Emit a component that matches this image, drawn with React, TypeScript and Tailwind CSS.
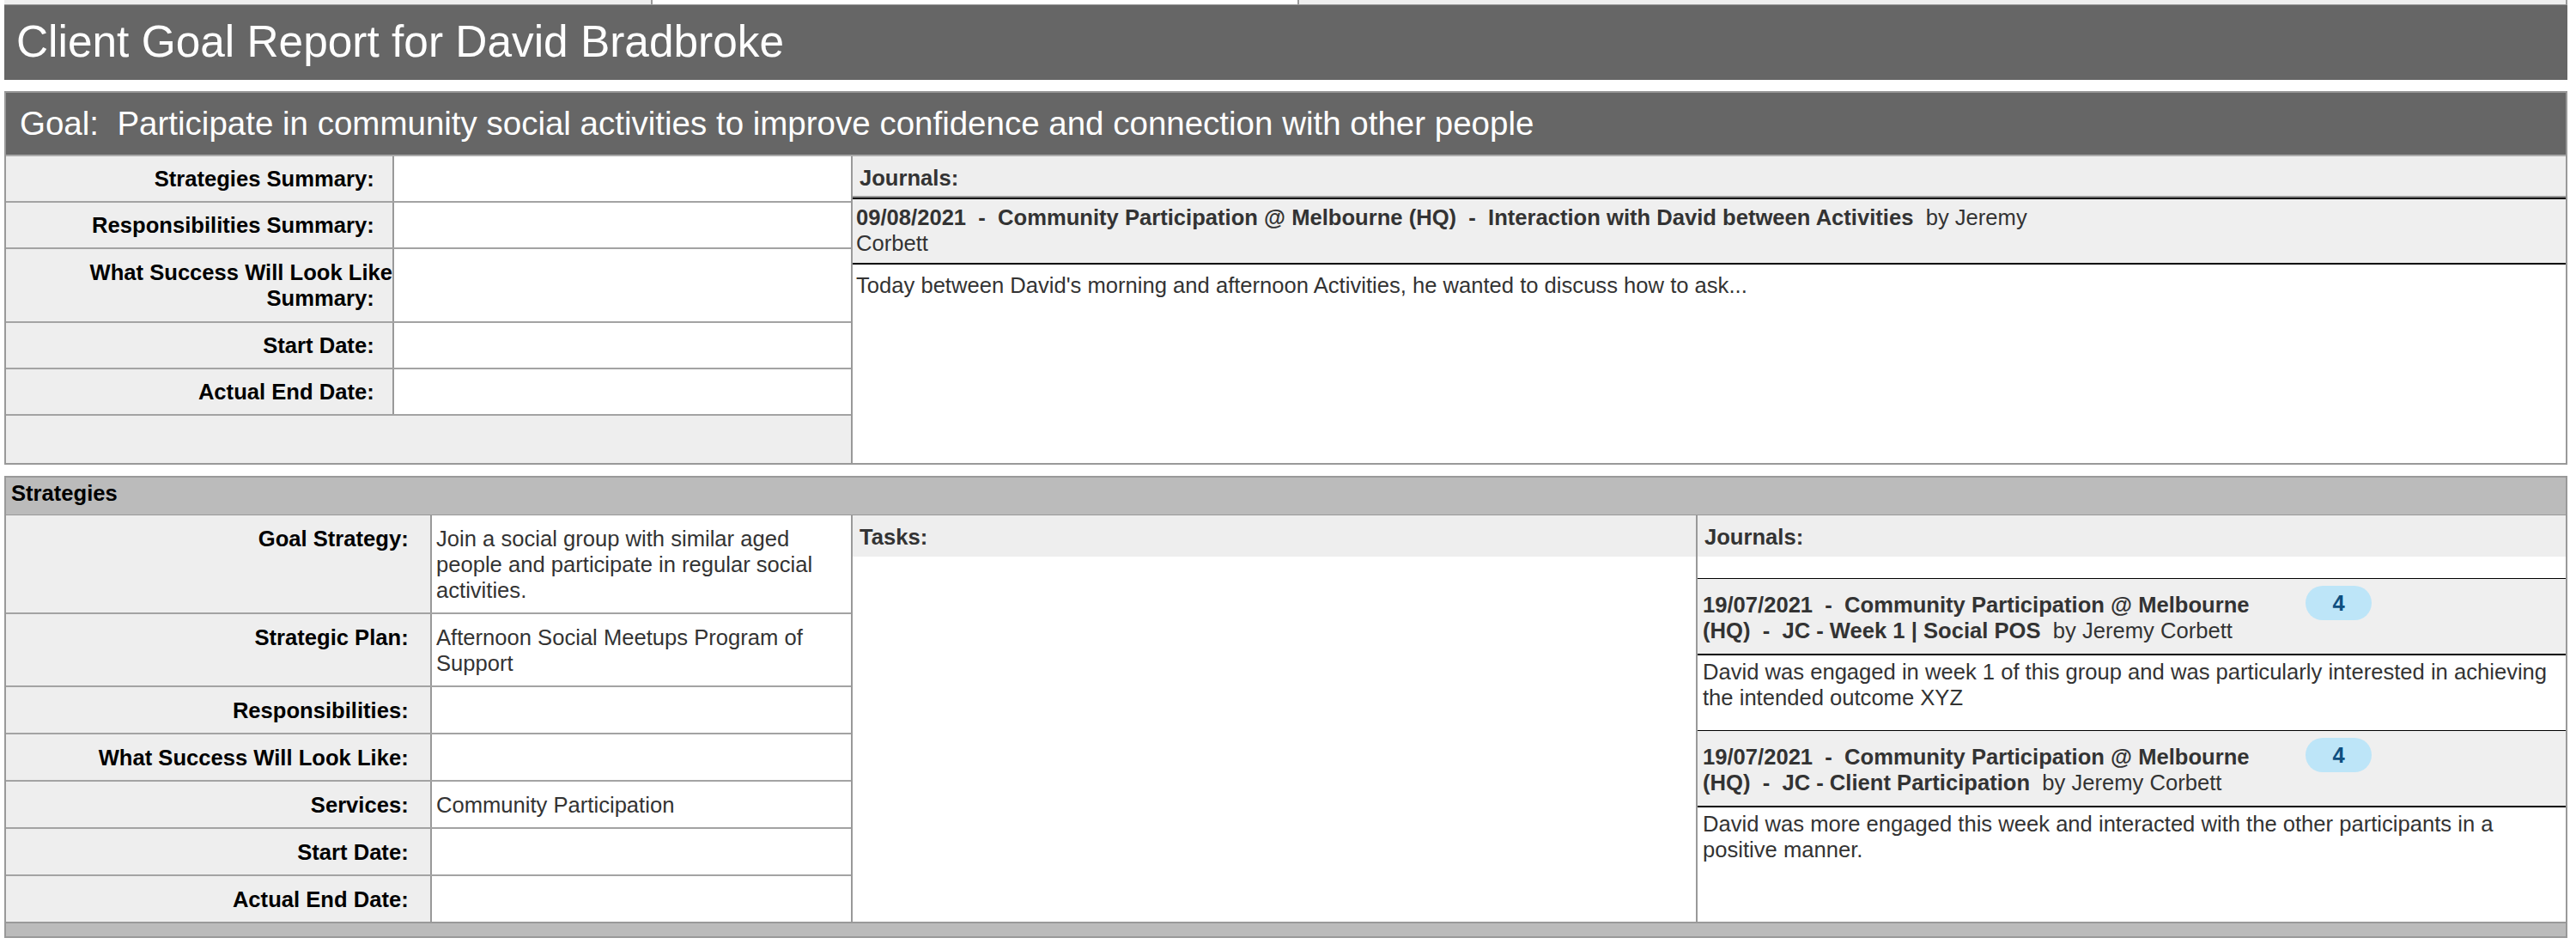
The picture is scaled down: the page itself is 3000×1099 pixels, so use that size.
const NB = "\u00a0\u00a0\u00a0";

function SummaryRow({ label, value, pad = "py-[11px]" }: { label: string; value?: string; pad?: string }) {
  return (
    <div className="flex border-b-2 border-[#a3a3a3]">
      <div className={`w-[452px] shrink-0 border-r-2 border-[#999] bg-[#eee] text-right font-bold text-black ${pad}`}>
        {label + NB}
      </div>
      <div className={`flex-1 bg-white px-[5px] ${pad}`}>{value}</div>
    </div>
  );
}

function StrategyRow({ label, value, last }: { label: string; value?: string; last?: boolean }) {
  return (
    <div className={`flex ${last ? "" : "border-b-2 border-[#a3a3a3]"}`}>
      <div className="w-[496px] shrink-0 border-r-2 border-[#999] bg-[#eee] pr-[4px] pt-[12px] pb-[11px] text-right font-bold text-black">
        {label + NB}
      </div>
      <div className="flex-1 bg-white px-[5px] pt-[12px] pb-[11px]">{value}</div>
    </div>
  );
}

function Badge({ n }: { n: number }) {
  return (
    <span className="ml-[32px] mt-[8px] flex h-[40px] w-[77px] shrink-0 items-center justify-center rounded-full bg-[#bde5f8] font-bold text-[#0f4f80]">
      {n}
    </span>
  );
}

// journal header wraps in two lines in the report, kept as two blocks
function StrategyJournal({ first, second, body, bodyClass }: { first: string; second: string; body: string; bodyClass: string }) {
  return (
    <div>
      <div className="flex items-start border-t border-b-2 border-t-black border-b-black bg-[#efefef] pl-[6px]">
        <div className="w-[670px] shrink-0 pt-[15px] pb-[12px]">
          <div className="font-bold">{first}</div>
          <div>
            <span className="font-bold">{second}</span>
            <span>{"\u00a0 by Jeremy Corbett"}</span>
          </div>
        </div>
        <Badge n={4} />
      </div>
      <div className={`bg-white pl-[6px] pr-[20px] pt-[4px] ${bodyClass}`}>{body}</div>
    </div>
  );
}

export default function App() {
  return (
    <div className="min-h-[1099px] w-[3000px] bg-white font-['Liberation_Sans',Arial,sans-serif] text-[25.6px] leading-[30px] text-[#333]">
      {/* tail of the table above */}
      <div className="ml-[5px] flex h-[6px] w-[2985px] border-b border-[#999]">
        <div className="w-[753px] bg-[#eee]" />
        <div className="w-[753px] border-l-2 border-[#999] bg-white" />
        <div className="flex-1 border-x-2 border-[#999] bg-[#eee]" />
      </div>

      <div className="ml-[5px] flex h-[87px] w-[2985px] items-center bg-[#666] pb-[3px] pl-[14px] text-[51.4px] leading-[58px] text-white">
        Client Goal Report for David Bradbroke
      </div>

      {/* goal */}
      <div className="mt-[13px] ml-[5px] w-[2985px] border-2 border-[#999]">
        <div className="flex h-[74px] items-center border-b-2 border-[#aaa] bg-[#666] pl-[16px] text-[38.5px] leading-[44px] text-white">
          {"Goal:\u00a0 Participate in community social activities to improve confidence and connection with other people"}
        </div>
        <div className="flex">
          <div className="flex w-[984px] shrink-0 flex-col">
            <SummaryRow label="Strategies Summary:" />
            <SummaryRow label="Responsibilities Summary:" />
            <SummaryRow label="What Success Will Look Like Summary:" pad="py-[12px]" />
            <SummaryRow label="Start Date:" />
            <SummaryRow label="Actual End Date:" />
            <div className="h-[55px] bg-[#eee]" />
          </div>
          <div className="flex flex-1 flex-col border-l-2 border-[#999]">
            <div className="h-[48px] border-b-2 border-[#999] bg-[#eee] pl-[8px] pt-[10px] font-bold">Journals:</div>
            <div className="border-y-2 border-black bg-[#efefef] pl-[4px] pt-[6px] pb-[8px]">
              <div>
                <span className="font-bold">
                  {"09/08/2021\u00a0 - \u00a0Community Participation @ Melbourne (HQ)\u00a0 - \u00a0Interaction with David between Activities"}
                </span>
                <span>{"\u00a0 by Jeremy"}</span>
              </div>
              <div>Corbett</div>
            </div>
            <div className="flex-1 bg-white pl-[4px] pt-[9px]">
              Today between David's morning and afternoon Activities, he wanted to discuss how to ask...
            </div>
          </div>
        </div>
      </div>

      {/* strategies */}
      <div className="mt-[13px] ml-[5px] w-[2985px] border-x-2 border-t-2 border-[#999]">
        <div className="h-[44px] border-b border-[#999] bg-[#bbb] pl-[6px] pt-[3px] font-bold text-black">Strategies</div>
        <div className="flex">
          <div className="flex w-[984px] shrink-0 flex-col">
            <StrategyRow label="Goal Strategy:" value="Join a social group with similar aged people and participate in regular social activities." />
            <StrategyRow label="Strategic Plan:" value="Afternoon Social Meetups Program of Support" />
            <StrategyRow label="Responsibilities:" />
            <StrategyRow label="What Success Will Look Like:" />
            <StrategyRow label="Services:" value="Community Participation" />
            <StrategyRow label="Start Date:" />
            <StrategyRow label="Actual End Date:" last />
          </div>
          <div className="flex w-[984px] shrink-0 flex-col border-l-2 border-[#999]">
            <div className="h-[48px] bg-[#eee] pl-[8px] pt-[10px] font-bold">Tasks:</div>
            <div className="flex-1 bg-white" />
          </div>
          <div className="flex flex-1 flex-col border-l-2 border-[#999]">
            <div className="h-[48px] bg-[#eee] pl-[8px] pt-[10px] font-bold">Journals:</div>
            <div className="h-[25px] bg-white" />
            <StrategyJournal
              first={"19/07/2021\u00a0 - \u00a0Community Participation @ Melbourne"}
              second={"(HQ)\u00a0 - \u00a0JC - Week 1 | Social POS"}
              body="David was engaged in week 1 of this group and was particularly interested in achieving the intended outcome XYZ"
              bodyClass="h-[87px]"
            />
            <div className="flex flex-1 flex-col">
              <StrategyJournal
                first={"19/07/2021\u00a0 - \u00a0Community Participation @ Melbourne"}
                second={"(HQ)\u00a0 - \u00a0JC - Client Participation"}
                body="David was more engaged this week and interacted with the other participants in a positive manner."
                bodyClass=""
              />
            </div>
          </div>
        </div>
        <div className="h-[19px] border-y-2 border-[#999] bg-[#bbb]" />
      </div>
    </div>
  );
}
